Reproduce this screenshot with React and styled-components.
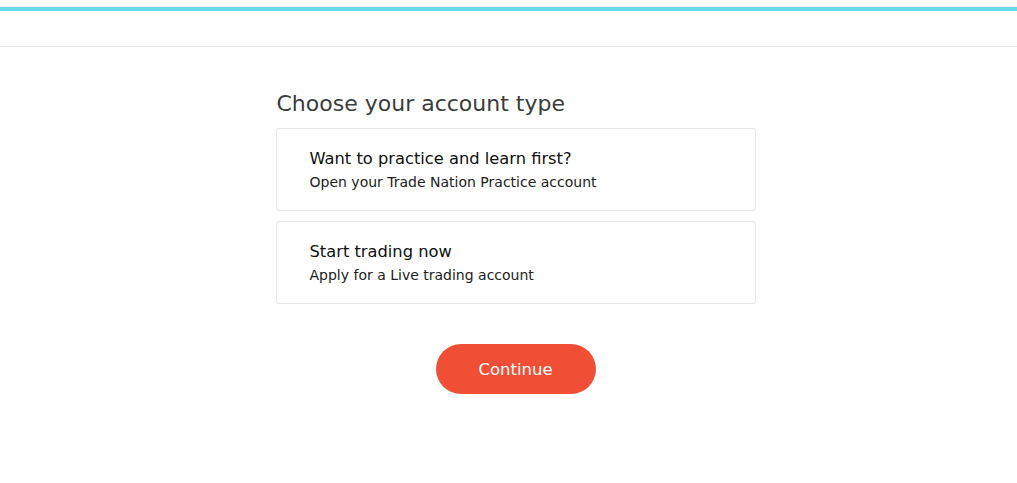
import React from "react";
import styled, { createGlobalStyle } from "styled-components";

const Global = createGlobalStyle`
  html, body { margin: 0; padding: 0; background: #fff; }
  body { font-family: "DejaVu Sans", "Open Sans", sans-serif; color: #1a1a1a; }
`;

const Header = styled.header`
  margin-top: 6px;
  box-sizing: border-box;
  height: 41px;
  border-top: 1px solid #ececec;
  border-bottom: 1px solid #e8e8e8;
`;

const Accent = styled.div`
  height: 4px;
  background: #62dde6;
`;

const Main = styled.main`
  display: flex;
  justify-content: center;
  padding: 43px 0 0 14px;
`;

const Column = styled.div`
  width: 480px;
  display: flex;
  flex-direction: column;
`;

const Title = styled.h1`
  margin: 0 0 10px 1px;
  font-size: 22px;
  font-weight: 400;
  color: #3c3c3c;
  line-height: 28px;
`;

const Card = styled.button`
  all: unset;
  box-sizing: border-box;
  height: 83px;
  border: 1px solid #e6e6e6;
  border-radius: 3px;
  padding: 19px 33px;
  display: flex;
  flex-direction: column;
  gap: 3px;
  cursor: pointer;
  & + & { margin-top: 10px; }
`;

const CardTitle = styled.span`
  font-size: 16.3px;
  line-height: 22px;
  color: #111;
`;

const CardText = styled.span`
  font-size: 14px;
  line-height: 18px;
  color: #222;
`;

const Actions = styled.div`
  display: flex;
  justify-content: center;
  padding-top: 40px;
`;

const Button = styled.button`
  border: none;
  width: 160px;
  height: 50px;
  border-radius: 25px;
  background: #f04f36;
  color: #fff;
  font-family: inherit;
  font-size: 16.5px;
  cursor: pointer;
`;

export default function App() {
  return (
    <>
      <Global />
      <Header>
        <Accent />
      </Header>
      <Main>
        <Column>
          <Title>Choose your account type</Title>
          <Card>
            <CardTitle>Want to practice and learn first?</CardTitle>
            <CardText>Open your Trade Nation Practice account</CardText>
          </Card>
          <Card>
            <CardTitle>Start trading now</CardTitle>
            <CardText>Apply for a Live trading account</CardText>
          </Card>
          <Actions>
            <Button>Continue</Button>
          </Actions>
        </Column>
      </Main>
    </>
  );
}
